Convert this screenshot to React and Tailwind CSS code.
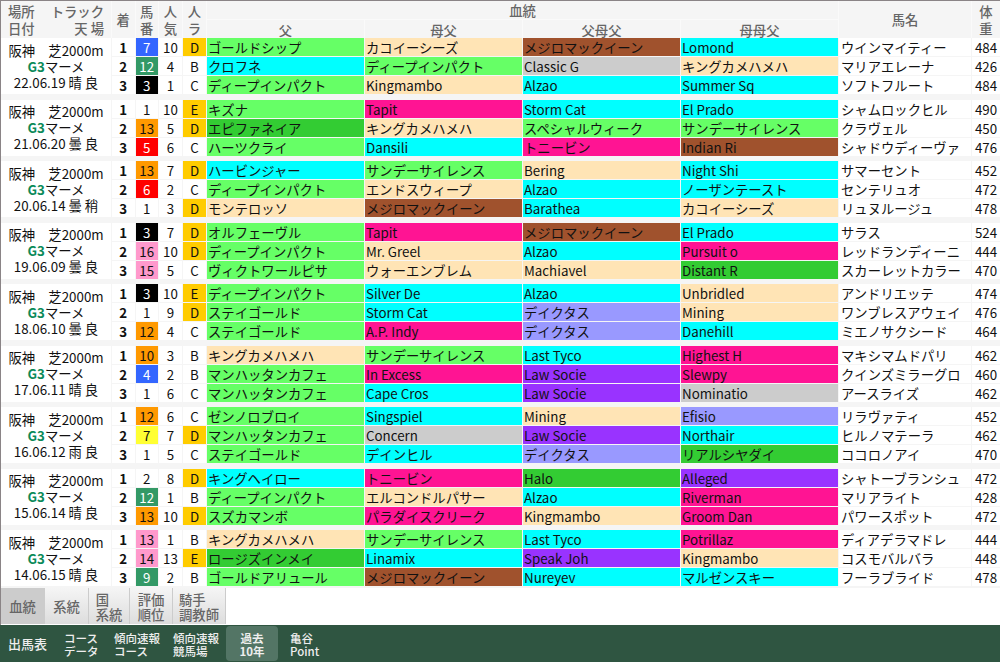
const P = 'bg-[#ffe4b5]', L = 'bg-[#66ff66]', C = 'bg-[#00ffff]', K = 'bg-[#ff1493]', B = 'bg-[#a0522d]', G = 'bg-[#cccccc]', V = 'bg-[#9933ff]', W = 'bg-[#9999ff]', D = 'bg-[#33cc33]';
const nb = {
  blue: 'bg-[#3366ff] text-white', green: 'bg-[#339966] text-white', black: 'bg-black text-white', orange: 'bg-[#ff9900]', red: 'bg-[#ff0000] text-white', yellow: 'bg-[#ffff33]', pink: 'bg-[#ff99cc]', white: 'bg-white',
};
const races = [
  { d: '22.06.19 晴 良', r: [
    [7, 'blue', 10, 'D', ['ゴールドシップ', L], ['カコイーシーズ', P], ['メジロマックイーン', B], ['Lomond', C], 'ウインマイティー', 484],
    [12, 'green', 4, 'B', ['クロフネ', C], ['ディープインパクト', L], ['Classic G', G], ['キングカメハメハ', P], 'マリアエレーナ', 426],
    [3, 'black', 1, 'C', ['ディープインパクト', L], ['Kingmambo', P], ['Alzao', C], ['Summer Sq', C], 'ソフトフルート', 484],
  ] },
  { d: '21.06.20 曇 良', r: [
    [1, 'white', 10, 'E', ['キズナ', L], ['Tapit', K], ['Storm Cat', C], ['El Prado', C], 'シャムロックヒル', 490],
    [13, 'orange', 5, 'D', ['エピファネイア', D], ['キングカメハメハ', P], ['スペシャルウィーク', L], ['サンデーサイレンス', L], 'クラヴェル', 450],
    [5, 'red', 6, 'C', ['ハーツクライ', L], ['Dansili', C], ['トニービン', K], ['Indian Ri', B], 'シャドウディーヴァ', 476],
  ] },
  { d: '20.06.14 曇 稍', r: [
    [13, 'orange', 7, 'D', ['ハービンジャー', C], ['サンデーサイレンス', L], ['Bering', P], ['Night Shi', C], 'サマーセント', 452],
    [6, 'red', 2, 'C', ['ディープインパクト', L], ['エンドスウィープ', P], ['Alzao', C], ['ノーザンテースト', C], 'センテリュオ', 472],
    [1, 'white', 3, 'D', ['モンテロッソ', P], ['メジロマックイーン', B], ['Barathea', C], ['カコイーシーズ', P], 'リュヌルージュ', 478],
  ] },
  { d: '19.06.09 曇 良', r: [
    [3, 'black', 7, 'D', ['オルフェーヴル', L], ['Tapit', K], ['メジロマックイーン', B], ['El Prado', C], 'サラス', 524],
    [16, 'pink', 10, 'D', ['ディープインパクト', L], ['Mr. Greel', P], ['Alzao', C], ['Pursuit o', K], 'レッドランディーニ', 444],
    [15, 'pink', 5, 'C', ['ヴィクトワールピサ', L], ['ウォーエンブレム', P], ['Machiavel', P], ['Distant R', D], 'スカーレットカラー', 470],
  ] },
  { d: '18.06.10 曇 良', r: [
    [3, 'black', 10, 'E', ['ディープインパクト', L], ['Silver De', C], ['Alzao', C], ['Unbridled', P], 'アンドリエッテ', 474],
    [1, 'white', 9, 'D', ['ステイゴールド', L], ['Storm Cat', C], ['デイクタス', W], ['Mining', P], 'ワンブレスアウェイ', 476],
    [12, 'orange', 4, 'C', ['ステイゴールド', L], ['A.P. Indy', K], ['デイクタス', W], ['Danehill', C], 'ミエノサクシード', 464],
  ] },
  { d: '17.06.11 晴 良', r: [
    [10, 'orange', 3, 'B', ['キングカメハメハ', P], ['サンデーサイレンス', L], ['Last Tyco', C], ['Highest H', K], 'マキシマムドパリ', 462],
    [4, 'blue', 2, 'B', ['マンハッタンカフェ', L], ['In Excess', K], ['Law Socie', V], ['Slewpy', K], 'クインズミラーグロ', 460],
    [1, 'white', 6, 'C', ['マンハッタンカフェ', L], ['Cape Cros', C], ['Law Socie', V], ['Nominatio', G], 'アースライズ', 462],
  ] },
  { d: '16.06.12 雨 良', r: [
    [12, 'orange', 6, 'C', ['ゼンノロブロイ', L], ['Singspiel', C], ['Mining', P], ['Efisio', W], 'リラヴァティ', 452],
    [7, 'yellow', 7, 'D', ['マンハッタンカフェ', L], ['Concern', G], ['Law Socie', V], ['Northair', C], 'ヒルノマテーラ', 462],
    [1, 'white', 5, 'C', ['ステイゴールド', L], ['デインヒル', C], ['デイクタス', W], ['リアルシヤダイ', D], 'ココロノアイ', 470],
  ] },
  { d: '15.06.14 晴 良', r: [
    [2, 'white', 8, 'D', ['キングヘイロー', C], ['トニービン', K], ['Halo', D], ['Alleged', V], 'シャトーブランシュ', 472],
    [12, 'green', 1, 'B', ['ディープインパクト', L], ['エルコンドルパサー', P], ['Alzao', C], ['Riverman', K], 'マリアライト', 428],
    [13, 'orange', 10, 'D', ['スズカマンボ', L], ['パラダイスクリーク', K], ['Kingmambo', P], ['Groom Dan', K], 'パワースポット', 472],
  ] },
  { d: '14.06.15 晴 良', r: [
    [13, 'pink', 1, 'B', ['キングカメハメハ', P], ['サンデーサイレンス', L], ['Last Tyco', C], ['Potrillaz', K], 'ディアデラマドレ', 444],
    [14, 'pink', 13, 'E', ['ロージズインメイ', D], ['Linamix', C], ['Speak Joh', V], ['Kingmambo', P], 'コスモバルバラ', 448],
    [9, 'green', 2, 'B', ['ゴールドアリュール', L], ['メジロマックイーン', B], ['Nureyev', C], ['マルゼンスキー', C], 'フーラブライド', 478],
  ] },
];

const cols = 'grid grid-cols-[110px_22.5px_22.5px_23px_23px_157px_157px_157px_157px_132px_28px] gap-x-px';
const mid = 'flex items-center justify-center pt-[2px]';

function Race({ race, first }) {
  return (
    <div className={`${cols} grid-rows-[18px_18px_18px] gap-y-px ${first ? '' : 'mt-[5.5px]'}`}>
      <div className="row-span-3 bg-white flex flex-col items-center justify-center leading-[16px] pt-px whitespace-pre">
        <div>阪神　芝2000m</div>
        <div><span className="font-bold text-[#0b8a5a]">G3</span>マーメ</div>
        <div>{race.d}</div>
      </div>
      {race.r.map((r, i) => [
        <div key={i + 'a'} className={`bg-white font-bold ${mid}`}>{i + 1}</div>,
        <div key={i + 'b'} className={`${nb[r[1]]} ${mid}`}>{r[0]}</div>,
        <div key={i + 'c'} className={`bg-white ${mid}`}>{r[2]}</div>,
        <div key={i + 'd'} className={`${r[3] === 'D' || r[3] === 'E' ? 'bg-[#ffcc00]' : 'bg-white'} ${mid}`}>{r[3]}</div>,
        ...[r[4], r[5], r[6], r[7]].map((c, j) => (
          <div key={i + 'p' + j} className={`${c[1]} flex items-center pl-px pt-[2px] whitespace-nowrap overflow-hidden`}>{c[0]}</div>
        )),
        <div key={i + 'n'} className="bg-white flex items-center pl-0.5 pt-[2px] whitespace-nowrap overflow-hidden">{r[8]}</div>,
        <div key={i + 'w'} className={`bg-white ${mid}`}>{r[9]}</div>,
      ])}
    </div>
  );
}

function Tab({ children, active, w }) {
  return (
    <div className={`${w} h-full flex items-center justify-center leading-[15px] pt-px font-medium text-[#666] border-r border-[#ccc] ${active ? 'bg-[#cccccc]' : 'bg-gradient-to-b from-[#f5f5f5] to-[#dddddd]'}`}>
      <div className="text-left">{children}</div>
    </div>
  );
}

function Nav({ children, active, w }) {
  return (
    <div className={`${w} h-[35px] flex flex-col justify-center pt-[2px] text-[11.5px] leading-[13px] rounded-sm ${active ? 'bg-[#537565] items-center text-center font-bold' : 'font-medium'}`}>
      <div>{children}</div>
    </div>
  );
}

export default function App() {
  return (
    <div className="w-[1000px] h-[662px] overflow-hidden bg-white text-[13.33px] text-[#111] font-['Noto_Sans_CJK_JP','Noto_Sans',sans-serif] flex flex-col">
      <div className="flex-1 border-l border-t border-[#8a8486] flex flex-col">
        <div className="h-[37px] bg-[#fafafa] text-[#666] font-medium">
          <div className={`${cols} grid-rows-[18px_18px] gap-y-px leading-[17px]`}>
            <div className="row-span-2 bg-[#f5f5f5] flex flex-col justify-center px-[7px]">
              <div className="flex justify-between"><span>場所</span><span>トラック</span></div>
              <div className="flex justify-between"><span>日付</span><span className="whitespace-pre">天 場</span></div>
            </div>
            <div className="row-span-2 bg-[#f5f5f5] flex items-center justify-center">着</div>
            <div className="row-span-2 bg-[#f5f5f5] flex items-center justify-center text-center">馬<br />番</div>
            <div className="row-span-2 bg-[#f5f5f5] flex items-center justify-center text-center">人<br />気</div>
            <div className="row-span-2 bg-[#f5f5f5] flex items-center justify-center text-center">人<br />ラ</div>
            <div className="col-span-4 bg-[#f5f5f5] flex items-center justify-center pt-px">血統</div>
            <div className="row-span-2 bg-[#f5f5f5] flex items-center justify-center">馬名</div>
            <div className="row-span-2 bg-[#f5f5f5] flex items-center justify-center text-center">体<br />重</div>
            <div className="bg-[#f5f5f5] flex items-center justify-center pt-[2px]">父</div>
            <div className="bg-[#f5f5f5] flex items-center justify-center pt-[2px]">母父</div>
            <div className="bg-[#f5f5f5] flex items-center justify-center pt-[2px]">父母父</div>
            <div className="bg-[#f5f5f5] flex items-center justify-center pt-[2px]">母母父</div>
          </div>
        </div>
        <div className="bg-[#f5f5f5] h-[550px]">
          {races.map((race, i) => <Race key={i} race={race} first={i === 0} />)}
        </div>
        <div className="h-[36px] flex">
          <Tab active w="w-[44px]">血統</Tab>
          <Tab w="w-[44px]">系統</Tab>
          <Tab w="w-[41px]">国<br />系統</Tab>
          <Tab w="w-[43px]">評価<br />順位</Tab>
          <Tab w="w-[53px]">騎手<br />調教師</Tab>
        </div>
      </div>
      <div className="h-[37px] bg-[#2f5541] text-[#eee] flex items-center">
        <div className="w-[64px] pl-2 pt-px text-[13px] font-medium">出馬表</div>
        <Nav w="w-[50px]">コース<br />データ</Nav>
        <Nav w="w-[59px]">傾向速報<br />コース</Nav>
        <Nav w="w-[53px]">傾向速報<br />競馬場</Nav>
        <Nav active w="w-[52px]">過去<br />10年</Nav>
        <Nav w="w-[52px] ml-3">亀谷<br />Point</Nav>
      </div>
    </div>
  );
}
